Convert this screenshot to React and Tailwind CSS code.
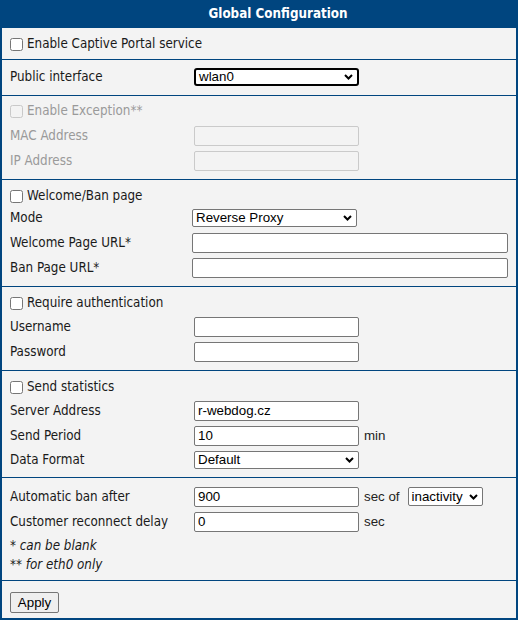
import React from "react";

const LBL = "font-[family-name:DejaVu_Sans_Condensed,DejaVu_Sans,sans-serif] text-[13.3px]";
const INP = "font-[family-name:Liberation_Sans,Arial,sans-serif] text-[13.33px]";

function Chevron() {
  return (
    <svg className="pointer-events-none absolute right-[4px] top-1/2 -translate-y-1/2" width="9" height="6" viewBox="0 0 9 6">
      <path d="M1 1 L4.5 4.5 L8 1" fill="none" stroke="#000" strokeWidth="2" />
    </svg>
  );
}

function Select({ value, className = "", border = "border border-[#767676] rounded-[2px]" }) {
  return (
    <div className={`relative h-[18px] bg-white ${border} ${className}`}>
      <div className={`${INP} flex h-full items-center pl-[3px] text-black leading-none`}>{value}</div>
      <Chevron />
    </div>
  );
}

function TextInput({ value = "", className = "w-[165px]", disabled = false }) {
  return (
    <input
      readOnly
      value={value}
      disabled={disabled}
      className={`${INP} h-[20px] rounded-[2px] border px-[3px] text-black leading-none ${
        disabled ? "border-[#cacaca] bg-[#f3f3f3]" : "border-[#767676] bg-white"
      } ${className}`}
    />
  );
}

function Check({ label, disabled = false }) {
  return (
    <label className="flex h-[20px] items-center">
      <input
        type="checkbox"
        disabled={disabled}
        className={`m-0 h-[13px] w-[13px] appearance-none rounded-[2.5px] border ${
          disabled ? "border-[#c9c9c9] bg-[#f3f3f3]" : "border-[#767676] bg-white"
        }`}
      />
      <span className={`${LBL} ml-[4px] ${disabled ? "text-[#9a9a9a]" : "text-[#1a1a1a]"}`}>{label}</span>
    </label>
  );
}

function Row({ label, children, h = "h-[25px]", disabled = false }) {
  return (
    <div className={`flex items-center ${h}`}>
      <div className={`${LBL} w-[184px] shrink-0 ${disabled ? "text-[#9a9a9a]" : "text-[#1a1a1a]"}`}>{label}</div>
      <div className="flex items-center">{children}</div>
    </div>
  );
}

function Unit({ children }) {
  return <span className={`${INP} ml-[5px] text-[#222]`}>{children}</span>;
}

export default function App() {
  return (
    <div className="w-[518px] h-[620px] bg-[#f3f3f3] border-x-2 border-b-2 border-[#00457f] flex flex-col">
      <div className="h-[28px] shrink-0 bg-[#00457f] flex items-center justify-center pl-[38px]">
        <span className="font-[family-name:DejaVu_Sans_Condensed,DejaVu_Sans,sans-serif] text-[13.3px] font-bold text-white">
          Global Configuration
        </span>
      </div>

      {/* Section 1 */}
      <div className="pl-[8px] pt-[6px] pb-[5px] border-b border-[#00457f]">
        <Check label="Enable Captive Portal service" />
      </div>

      {/* Section 2 */}
      <div className="pl-[8px] pt-[7px] pb-[8px] border-b border-[#00457f]">
        <Row label="Public interface" h="h-[20px]">
          <Select value="wlan0" className="w-[165px]" border="border-2 border-black rounded-[3px]" />
        </Row>
      </div>

      {/* Section 3 */}
      <div className="pl-[8px] pt-[5px] pb-[6px] border-b border-[#00457f] flex flex-col">
        <Check label="Enable Exception**" disabled />
        <div className="h-[2px]" />
        <Row label="MAC Address" disabled>
          <TextInput disabled />
        </Row>
        <Row label="IP Address" disabled>
          <TextInput disabled />
        </Row>
      </div>

      {/* Section 4 */}
      <div className="pl-[8px] pt-[6px] pb-[6px] border-b border-[#00457f] flex flex-col">
        <Check label="Welcome/Ban page" />
        <Row label="Mode" h="h-[24px]">
          <Select value="Reverse Proxy" className="w-[165px] ml-[-2px]" />
        </Row>
        <Row label="Welcome Page URL*">
          <TextInput className="w-[316px] ml-[-2px]" />
        </Row>
        <Row label="Ban Page URL*">
          <TextInput className="w-[316px] ml-[-2px]" />
        </Row>
      </div>

      {/* Section 5 */}
      <div className="pl-[8px] pt-[6px] pb-[6px] border-b border-[#00457f] flex flex-col">
        <Check label="Require authentication" />
        <div className="h-[1px]" />
        <Row label="Username">
          <TextInput />
        </Row>
        <Row label="Password">
          <TextInput />
        </Row>
      </div>

      {/* Section 6 */}
      <div className="pl-[8px] pt-[6px] pb-[6px] border-b border-[#00457f] flex flex-col">
        <Check label="Send statistics" />
        <div className="h-[1px]" />
        <Row label="Server Address">
          <TextInput value="r-webdog.cz" />
        </Row>
        <Row label="Send Period">
          <TextInput value="10" />
          <Unit>min</Unit>
        </Row>
        <Row label="Data Format" h="h-[23px]">
          <Select value="Default" className="w-[165px]" />
        </Row>
      </div>

      {/* Section 7 */}
      <div className="pl-[8px] pt-[6px] pb-[6px] border-b border-[#00457f] flex flex-col">
        <Row label="Automatic ban after">
          <TextInput value="900" />
          <Unit>sec of</Unit>
          <Select value="inactivity" className="w-[75px] h-[19px] ml-[8px]" />
        </Row>
        <Row label="Customer reconnect delay">
          <TextInput value="0" />
          <Unit>sec</Unit>
        </Row>
        <div className="h-[2px]" />
        <div className={`${LBL} h-[19px] flex items-center text-[#1a1a1a]`}>
          <span>*&nbsp;</span>
          <span className="italic">can be blank</span>
        </div>
        <div className={`${LBL} h-[19px] flex items-center text-[#1a1a1a]`}>
          <span>**&nbsp;</span>
          <span className="italic">for eth0 only</span>
        </div>
      </div>

      {/* Section 8 */}
      <div className="pl-[8px] pt-[8px]">
        <button className={`${INP} h-[21px] w-[49px] rounded-[2px] border border-[#767676] bg-[#efefef] text-black leading-none`}>
          Apply
        </button>
      </div>
    </div>
  );
}
